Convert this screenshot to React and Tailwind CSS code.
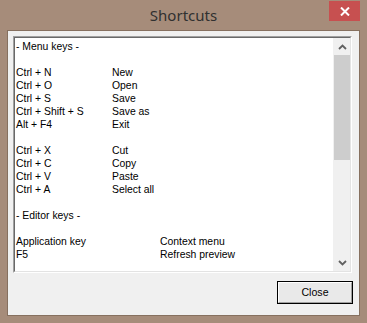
const KEYS = [
  { type: "header", text: "- Menu keys -" },
  { type: "blank" },
  { type: "row", key: "Ctrl + N", action: "New" },
  { type: "row", key: "Ctrl + O", action: "Open" },
  { type: "row", key: "Ctrl + S", action: "Save" },
  { type: "row", key: "Ctrl + Shift + S", action: "Save as" },
  { type: "row", key: "Alt + F4", action: "Exit" },
  { type: "blank" },
  { type: "row", key: "Ctrl + X", action: "Cut" },
  { type: "row", key: "Ctrl + C", action: "Copy" },
  { type: "row", key: "Ctrl + V", action: "Paste" },
  { type: "row", key: "Ctrl + A", action: "Select all" },
  { type: "blank" },
  { type: "header", text: "- Editor keys -" },
  { type: "blank" },
  { type: "row", key: "Application key", action: "Context menu", wide: true },
  { type: "row", key: "F5", action: "Refresh preview", wide: true },
  { type: "blank" },
];

const Chevron = ({ down }) => (
  <svg width="9" height="6" viewBox="0 0 9 6" className={down ? "rotate-180" : ""}>
    <path d="M1 5 L4.5 1.5 L8 5" fill="none" stroke="#606060" strokeWidth="1.8" />
  </svg>
);

export default function App() {
  return (
    <div className="flex h-[323px] w-[367px] flex-col bg-[#a68c7a]" style={{ fontFamily: '"Liberation Sans", Arial, sans-serif' }}>
      {/* Title bar */}
      <div className="relative flex h-[30px] shrink-0 items-center justify-center">
        <span className="mt-[1px] text-[15px] text-[#303030]" style={{ fontFamily: '"Noto Sans", "Open Sans", sans-serif' }}>
          Shortcuts
        </span>
        <button className="absolute right-[7px] top-[1px] flex h-[20px] w-[31px] items-center justify-center bg-[#c75050]">
          <svg width="10" height="9" viewBox="0 0 10 9">
            <path d="M1 0.5 L9 8.5 M9 0.5 L1 8.5" stroke="#fff" strokeWidth="2" />
          </svg>
        </button>
      </div>

      {/* Client area */}
      <div className="mx-[7px] mb-[7px] flex flex-1 flex-col border border-[#86705f] bg-[#f0f0f0]">
        {/* Text box */}
        <div className="ml-[5px] mt-[5px] h-[237px] w-[339px] border border-b-white border-l-[#a0a0a0] border-r-white border-t-[#a0a0a0]">
          <div className="flex h-full border border-b-[#e3e3e3] border-l-[#696969] border-r-[#e3e3e3] border-t-[#696969] bg-white">
            <div className="flex-1 overflow-hidden pl-[1px] pt-[2px] text-[10.4px] leading-[13px] text-black">
              {KEYS.map((k, i) => {
                if (k.type === "blank") return <div key={i} className="h-[13px]" />;
                if (k.type === "header") return <div key={i} className="h-[13px] whitespace-nowrap">{k.text}</div>;
                return (
                  <div key={i} className="flex h-[13px] whitespace-nowrap">
                    <span className={k.wide ? "w-[144px]" : "w-[96px]"}>{k.key}</span>
                    <span>{k.action}</span>
                  </div>
                );
              })}
            </div>
            {/* Scrollbar */}
            <div className="flex w-[17px] shrink-0 flex-col bg-[#f0f0f0]">
              <div className="flex h-[17px] items-center justify-center pl-[1px]">
                <Chevron />
              </div>
              <div className="ml-[1px] h-[105px] bg-[#cdcdcd]" />
              <div className="flex-1" />
              <div className="flex h-[17px] items-center justify-center pl-[1px]">
                <Chevron down />
              </div>
            </div>
          </div>
        </div>

        {/* Footer */}
        <div className="flex justify-end pr-[6px] pt-[8px]">
          <button className="h-[23px] w-[76px] border border-black">
            <div className="flex h-full items-center justify-center border border-b-[#a0a0a0] border-l-white border-r-[#a0a0a0] border-t-white bg-[#e9e9e9] text-[10.6px] text-black">
              Close
            </div>
          </button>
        </div>
      </div>
    </div>
  );
}
